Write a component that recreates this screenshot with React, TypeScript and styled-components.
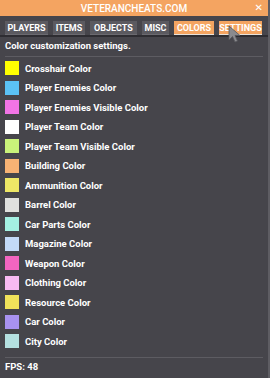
import styled, { createGlobalStyle } from "styled-components"

const Global = createGlobalStyle`
  html, body { margin: 0; padding: 0; background: #46454b; }
  body { font-family: Roboto, "Liberation Sans", sans-serif; }
`

const tabs: [string, number][] = [
  ["PLAYERS", 43],
  ["ITEMS", 32],
  ["OBJECTS", 47],
  ["MISC", 27],
  ["COLORS", 40],
  ["SETTINGS", 43],
]

const colors: [string, string][] = [
  ["Crosshair Color", "#ffff00"],
  ["Player Enemies Color", "#5bc2f5"],
  ["Player Enemies Visible Color", "#f274e6"],
  ["Player Team Color", "#ffffff"],
  ["Player Team Visible Color", "#c9f27a"],
  ["Building Color", "#f7b274"],
  ["Ammunition Color", "#eee766"],
  ["Barrel Color", "#e0e0de"],
  ["Car Parts Color", "#a4f0e2"],
  ["Magazine Color", "#c3d9f7"],
  ["Weapon Color", "#f265c0"],
  ["Clothing Color", "#f7baf2"],
  ["Resource Color", "#f0e25a"],
  ["Car Color", "#a892f0"],
  ["City Color", "#b4e0e0"],
]

const App = () => {
  return (
    <>
      <Global />
      <Window>
        <TitleBar>
          <Title>VETERANCHEATS.COM</Title>
          <Close>✕</Close>
        </TitleBar>
        <TabBar>
          {tabs.map(([t, w]) => (
            <Tab key={t} $w={w} $active={t === "COLORS" || t === "SETTINGS"}>{t}</Tab>
          ))}
          <Cursor width="14" height="18" viewBox="0 0 14 18">
            <path d="M1 1 L1 15 L4.5 11.5 L7 17 L9.5 16 L7 10.5 L12 10.5 Z" fill="#8a8a8e" stroke="#55555a" strokeWidth="0.8" />
          </Cursor>
        </TabBar>
        <Body>
          <Heading>Color customization settings.</Heading>
          <Divider />
          <List>
            {colors.map(([label, c]) => (
              <Row key={label}>
                <Swatch $color={c} />
                <Label>{label}</Label>
              </Row>
            ))}
          </List>
          <Divider $top={9} />
          <Fps>FPS: 48</Fps>
        </Body>
      </Window>
    </>
  )
}
export default App

const Window = styled.div`
width:270px;
height:378px;
background:#46454b;
border-right:2px solid #5e5d63;
box-sizing:border-box;
display:flex;
flex-direction:column;
overflow:hidden;
`

const TitleBar = styled.div`
height:16px;
background:#f4a461;
position:relative;
display:flex;
align-items:center;
justify-content:center;
`

const Title = styled.div`
color:#ffffff;
font-size:10px;
font-weight:500;
`

const Close = styled.div`
position:absolute;
right:5px;
top:2px;
color:#ffffff;
font-size:10px;
font-family:"DejaVu Sans", sans-serif;
`

const TabBar = styled.div`
position:relative;
display:flex;
gap:5px;
padding:5px 5px 0 5px;
height:14px;
border-bottom:2px solid #2e2d32;
`

const Tab = styled.div<{ $active?: boolean; $w: number }>`
width:${(p) => p.$w}px;
height:14px;
display:flex;
align-items:center;
justify-content:center;
background:${(p) => (p.$active ? "#f4a461" : "#5b5a60")};
color:#ffffff;
font-size:9px;
font-weight:700;
white-space:nowrap;
box-sizing:border-box;
border-bottom:1px solid ${(p) => (p.$active ? "#e8e2da" : "#6b6a70")};
`

const Cursor = styled.svg`
position:absolute;
left:228px;
top:9px;
`

const Body = styled.div`
flex:1;
display:flex;
flex-direction:column;
padding:3px 5px 0 5px;
`

const Heading = styled.div`
color:#ffffff;
font-size:9.5px;
font-weight:700;
height:12px;
line-height:12px;
`

const Divider = styled.div<{ $top?: number }>`
height:1px;
background:#5d5c62;
margin:${(p) => p.$top ?? 4}px 0 4px 0;
`

const List = styled.div`
display:flex;
flex-direction:column;
gap:5.5px;
`

const Row = styled.div`
display:flex;
align-items:center;
gap:6px;
height:14px;
`

const Swatch = styled.div<{ $color: string }>`
width:14px;
height:14px;
background:${(p) => p.$color};
`

const Label = styled.div`
color:#ffffff;
font-size:9.5px;
font-weight:700;
`

const Fps = styled.div`
color:#ffffff;
font-size:9.5px;
font-weight:700;
margin-top:-1px;
`
